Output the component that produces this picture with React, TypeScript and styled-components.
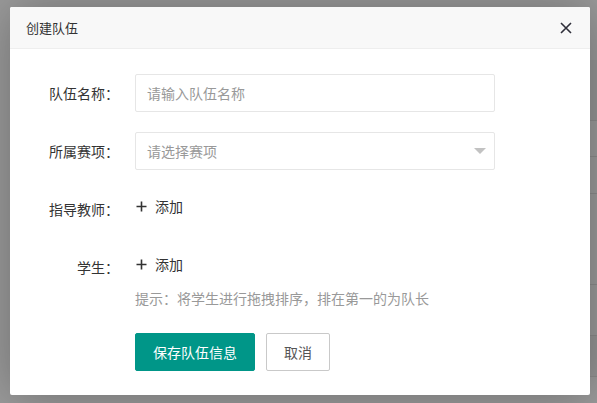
import React from "react";
import styled, { createGlobalStyle } from "styled-components";

const Global = createGlobalStyle`
  html, body { margin: 0; padding: 0; }
  body {
    width: 597px; height: 403px; overflow: hidden;
    background: #9b9b9b;
    font-family: "Noto Sans CJK SC", "Noto Sans", "Liberation Sans", sans-serif;
  }
`;

const Page = styled.div`
  width: 597px;
  height: 403px;
  position: relative;
  overflow: hidden;
`;

const BackTable = styled.div`
  display: flex;
  flex-direction: column;
  margin-left: 40px;
  padding-top: 60px;
  width: 640px;
  color: #5a5a5a;
  font-size: 14px;
`;

const BackRow = styled.div<{ $h: number; $shade?: boolean }>`
  display: grid;
  grid-template-columns: 123px 357px 60px 100px;
  height: ${(p) => p.$h}px;
  border-bottom: 1px solid #8c8c8c;
  background: ${(p) => (p.$shade ? "#969696" : "transparent")};
`;

const BackCell = styled.div`
  border-left: 1px solid #8c8c8c;
  padding-left: 6px;
  display: flex;
  flex-direction: column;
  justify-content: center;
  line-height: 19px;
  white-space: nowrap;
`;

const Modal = styled.div`
  position: absolute;
  left: 10px;
  top: 7px;
  width: 580px;
  height: 388px;
  background: #fff;
  border-radius: 2px;
  box-shadow: 1px 1px 50px rgba(0, 0, 0, 0.3);
  display: flex;
  flex-direction: column;
`;

const Header = styled.div`
  height: 41px;
  border-bottom: 1px solid #eee;
  background: #f8f8f8;
  border-radius: 2px 2px 0 0;
  display: flex;
  align-items: center;
  justify-content: space-between;
  padding: 0 18px 0 16px;
  font-size: 13px;
  color: #333;
`;

const Close = styled.button`
  border: 0;
  background: none;
  padding: 0;
  width: 12px;
  height: 12px;
  display: flex;
  cursor: pointer;
`;

const Body = styled.div`
  padding: 25px 0 0 0;
  display: flex;
  flex-direction: column;
`;

const Row = styled.div<{ $mb?: number }>`
  display: flex;
  align-items: flex-start;
  margin-bottom: ${(p) => p.$mb ?? 20}px;
`;

const Label = styled.label`
  width: 125px;
  box-sizing: border-box;
  padding-right: 16px;
  text-align: right;
  line-height: 38px;
  height: 38px;
  font-size: 14px;
  color: #333;
  flex: none;
`;

const Field = styled.div`
  width: 360px;
  position: relative;
`;

const Input = styled.input`
  box-sizing: border-box;
  width: 360px;
  height: 38px;
  border: 1px solid #e6e6e6;
  border-radius: 2px;
  padding: 0 10px 0 11px;
  font-size: 14px;
  font-family: inherit;
  color: #333;
  outline: none;
  &::placeholder { color: #999; }
`;

const Arrow = styled.span`
  position: absolute;
  right: 9px;
  top: 16px;
  width: 0;
  height: 0;
  border-left: 6px solid transparent;
  border-right: 6px solid transparent;
  border-top: 6px solid #c2c2c2;
`;

const AddButton = styled.button`
  border: 0;
  background: none;
  padding: 0 0 0 1px;
  height: 32px;
  display: flex;
  align-items: center;
  gap: 8px;
  font-size: 14px;
  font-family: inherit;
  color: #333;
  cursor: pointer;
`;

const Hint = styled.div`
  padding-left: 125px;
  font-size: 14px;
  color: #999;
  line-height: 20px;
  margin-top: 2px;
`;

const Actions = styled.div`
  display: flex;
  gap: 11px;
  padding-left: 125px;
  margin-top: 25px;
`;

const Btn = styled.button<{ $primary?: boolean }>`
  box-sizing: border-box;
  height: 38px;
  padding: 0 17px;
  border-radius: 2px;
  font-size: 14px;
  font-family: inherit;
  cursor: pointer;
  border: 1px solid ${(p) => (p.$primary ? "#009688" : "#c9c9c9")};
  background: ${(p) => (p.$primary ? "#009688" : "#fff")};
  color: ${(p) => (p.$primary ? "#fff" : "#555")};
`;

const PlusIcon = () => (
  <svg width="11" height="11" viewBox="0 0 11 11">
    <path d="M5.5 0.5v10M0.5 5.5h10" stroke="#333" strokeWidth="1.6" />
  </svg>
);

export default function App() {
  return (
    <Page>
      <Global />
      <BackTable>
        <BackRow $h={60} $shade>
          <BackCell />
          <BackCell />
          <BackCell />
          <BackCell />
        </BackRow>
        <BackRow $h={35}>
          <BackCell />
          <BackCell />
          <BackCell />
          <BackCell />
        </BackRow>
        <BackRow $h={36}>
          <BackCell />
          <BackCell />
          <BackCell>人</BackCell>
          <BackCell />
        </BackRow>
        <BackRow $h={90}>
          <BackCell />
          <BackCell />
          <BackCell>
            <span>长</span>
            <span>0c</span>
            <span>36</span>
          </BackCell>
          <BackCell />
        </BackRow>
        <BackRow $h={50}>
          <BackCell />
          <BackCell />
          <BackCell>
            <span>8</span>
            <span>|</span>
          </BackCell>
          <BackCell />
        </BackRow>
        <BackRow $h={40} $shade>
          <BackCell />
          <BackCell />
          <BackCell />
          <BackCell />
        </BackRow>
      </BackTable>
      <Modal>
        <Header>
          <span>创建队伍</span>
          <Close aria-label="关闭">
            <svg width="12" height="12" viewBox="0 0 12 12">
              <path d="M1 1L11 11M11 1L1 11" stroke="#2f2f3a" strokeWidth="1.6" />
            </svg>
          </Close>
        </Header>
        <Body>
          <Row>
            <Label>队伍名称：</Label>
            <Field>
              <Input placeholder="请输入队伍名称" />
            </Field>
          </Row>
          <Row>
            <Label>所属赛项：</Label>
            <Field>
              <Input placeholder="请选择赛项" readOnly />
              <Arrow />
            </Field>
          </Row>
          <Row>
            <Label>指导教师：</Label>
            <AddButton>
              <PlusIcon />
              添加
            </AddButton>
          </Row>
          <Row $mb={0}>
            <Label>学生：</Label>
            <AddButton>
              <PlusIcon />
              添加
            </AddButton>
          </Row>
          <Hint>提示：将学生进行拖拽排序，排在第一的为队长</Hint>
          <Actions>
            <Btn $primary>保存队伍信息</Btn>
            <Btn>取消</Btn>
          </Actions>
        </Body>
      </Modal>
    </Page>
  );
}
